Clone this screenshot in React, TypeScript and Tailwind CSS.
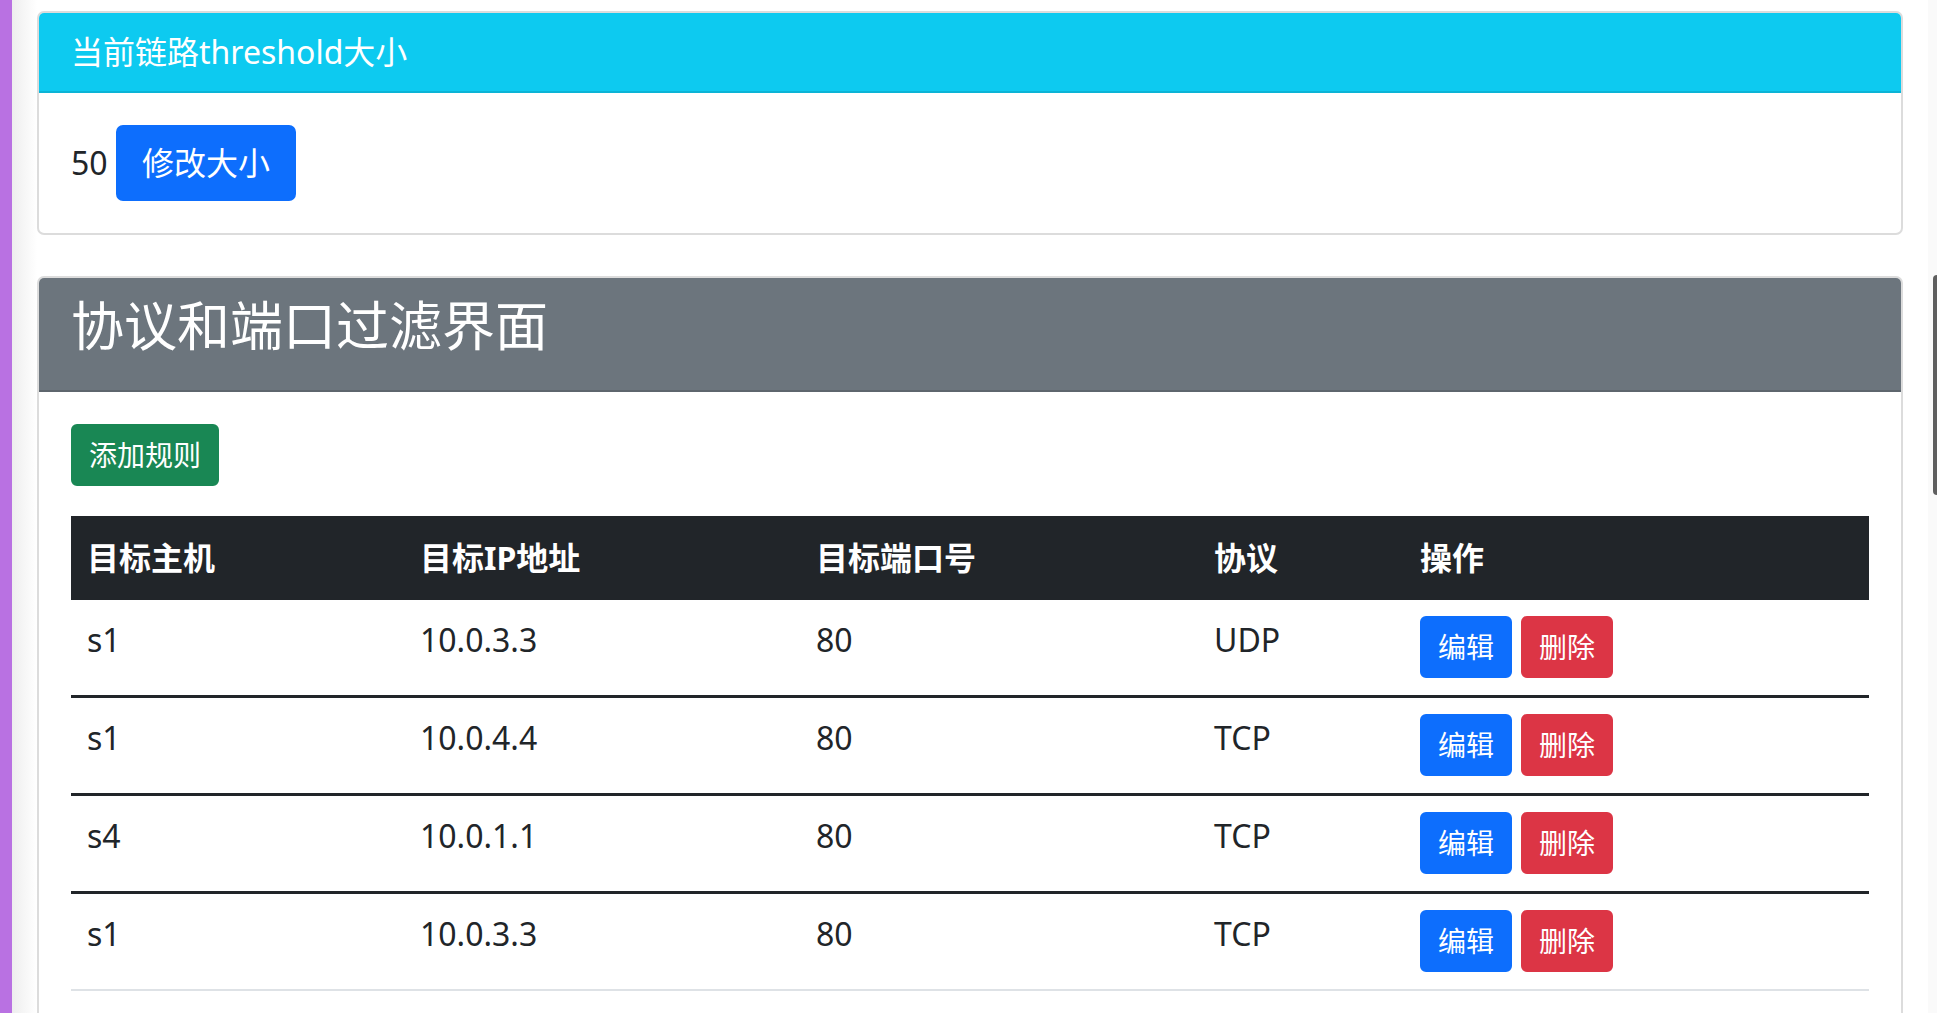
import React from 'react';

interface Rule {
  host: string;
  ip: string;
  port: string;
  protocol: string;
}

const rules: Rule[] = [
  { host: 's1', ip: '10.0.3.3', port: '80', protocol: 'UDP' },
  { host: 's1', ip: '10.0.4.4', port: '80', protocol: 'TCP' },
  { host: 's4', ip: '10.0.1.1', port: '80', protocol: 'TCP' },
  { host: 's1', ip: '10.0.3.3', port: '80', protocol: 'TCP' },
];

const columns = ['目标主机', '目标IP地址', '目标端口号', '协议', '操作'];

const ThresholdCard: React.FC = () => (
  <section className="shrink-0 overflow-hidden rounded-[7px] border-2 border-[#dcdcdc] bg-white">
    <div className="border-b-2 border-[#0bb4d6] bg-[#0dcaf0] px-[32px] py-[15px] text-[32px] leading-[48px] text-white">
      当前链路threshold大小
    </div>
    <div className="p-[32px] text-[32px] leading-[48px]">
      50{' '}
      <button className="inline-block rounded-[7px] border-2 border-[#0d6efd] bg-[#0d6efd] px-[24px] py-[12px] text-[32px] leading-[48px] text-white">
        修改大小
      </button>
    </div>
  </section>
);

const FilterCard: React.FC = () => (
  <section className="shrink-0 rounded-t-[7px] border-2 border-[#dcdcdc] bg-white">
    <div className="rounded-t-[5px] border-b-2 border-[#5e666d] bg-[#6c757d] px-[32px] py-[16px]">
      <h3 className="mb-[16px] text-[53px] font-normal leading-[64px] text-white">协议和端口过滤界面</h3>
    </div>
    <div className="p-[32px]">
      <div className="mb-[30px] flex">
        <button className="rounded-[6px] border-2 border-[#198754] bg-[#198754] px-[16px] py-[8px] text-[28px] leading-[42px] text-white">
          添加规则
        </button>
      </div>
      <table className="w-full table-fixed border-separate border-spacing-0 text-[32px] leading-[48px]">
        <colgroup>
          <col className="w-[333px]" />
          <col className="w-[396px]" />
          <col className="w-[398px]" />
          <col className="w-[206px]" />
          <col />
        </colgroup>
        <thead>
          <tr className="bg-[#212529] text-white">
            {columns.map((c) => (
              <th key={c} className="px-[16px] py-[18px] text-left font-bold">
                {c}
              </th>
            ))}
          </tr>
        </thead>
        <tbody>
          {rules.map((r, i) => {
            const border =
              i < rules.length - 1
                ? 'border-b-[3px] border-[#212529]'
                : 'border-b-2 border-[#dee2e6]';
            const cell = `px-[16px] pt-[16px] pb-[17px] align-top ${border}`;
            return (
              <tr key={i}>
                <td className={cell}>{r.host}</td>
                <td className={cell}>{r.ip}</td>
                <td className={cell}>{r.port}</td>
                <td className={cell}>{r.protocol}</td>
                <td className={cell}>
                  <div className="flex gap-[9px]">
                    <button className="rounded-[6px] border-2 border-[#0d6efd] bg-[#0d6efd] px-[16px] py-[8px] text-[28px] leading-[42px] text-white">
                      编辑
                    </button>
                    <button className="rounded-[6px] border-2 border-[#dc3545] bg-[#dc3545] px-[16px] py-[8px] text-[28px] leading-[42px] text-white">
                      删除
                    </button>
                  </div>
                </td>
              </tr>
            );
          })}
        </tbody>
      </table>
    </div>
  </section>
);

export default function App() {
  return (
    <div className="flex h-[1013px] overflow-hidden bg-white font-['Noto_Sans','Noto_Sans_CJK_SC',sans-serif] text-[#212529]">
      <div className="w-[12px] shrink-0 bg-[#b971e2]" />
      <div className="w-[25px] shrink-0 bg-linear-to-r from-[#eeeeee] to-white" />
      <main className="flex min-w-0 flex-1 flex-col gap-[41px] pt-[11px] pr-[25px]">
        <ThresholdCard />
        <FilterCard />
      </main>
      <div className="flex w-[9px] shrink-0 justify-end bg-[#fafafa] pt-[275px]">
        <div className="h-[220px] w-[4px] rounded-l-full bg-[#5f5f5f]" />
      </div>
    </div>
  );
}
